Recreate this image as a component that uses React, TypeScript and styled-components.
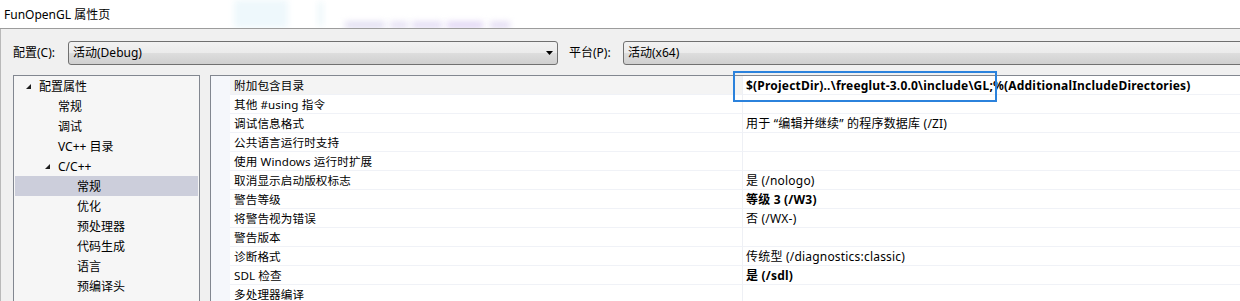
import * as React from "react";
import styled, { createGlobalStyle } from "styled-components";

const UI_FONT = `"Noto Sans", "Noto Sans CJK SC", sans-serif`;

const GlobalStyle = createGlobalStyle`
  html, body {
    margin: 0;
    padding: 0;
    background: #f0f0f0;
  }
  body {
    font-family: ${UI_FONT};
    font-size: 12px;
    color: #000;
  }
`;

// --------------------------------------------------------------------------------
// Window frame

const Window = styled.div`
  width: 1240px;
  height: 301px;
  overflow: hidden;
  background: #f0f0f0;
  display: flex;
  flex-direction: column;
`;

const TitleBar = styled.div`
  position: relative;
  height: 28px;
  flex: none;
  background: #ffffff;
  border-bottom: 1px solid #9c9c9c;
  display: flex;
  align-items: center;
  padding-left: 4px;
  overflow: hidden;
`;

const TitleText = styled.span`
  position: relative;
  z-index: 2;
  font-size: 12px;
  line-height: 16px;
  margin-top: 1px;
`;

// blurred aero glass smudges behind the title
const Smudge = styled.div<{ $x: number; $y: number; $w: number; $h: number; $c: string }>`
  position: absolute;
  left: ${(p) => p.$x}px;
  top: ${(p) => p.$y}px;
  width: ${(p) => p.$w}px;
  height: ${(p) => p.$h}px;
  background: ${(p) => p.$c};
  filter: blur(3px);
`;

const Body = styled.div`
  flex: 1;
  display: flex;
  flex-direction: column;
  padding: 12px 0 0 12px;
  border-left: 1px solid #b9b9b9;
  min-height: 0;
`;

// --------------------------------------------------------------------------------
// Config / platform row

const ConfigRow = styled.div`
  display: flex;
  align-items: center;
  height: 24px;
  flex: none;
`;

const FieldLabel = styled.span<{ $w: number; $gap?: number }>`
  width: ${(p) => p.$w}px;
  margin-left: ${(p) => p.$gap ?? 0}px;
  flex: none;
  line-height: 16px;
`;

const Combo = styled.div<{ $w: number }>`
  position: relative;
  width: ${(p) => p.$w}px;
  height: 24px;
  flex: none;
  box-sizing: border-box;
  border: 1px solid #707070;
  border-radius: 3px;
  background: linear-gradient(#f2f2f2 0%, #ebebeb 48%, #dddddd 52%, #cfcfcf 100%);
  display: flex;
  align-items: center;
  padding-left: 4px;
  line-height: 16px;
`;

const ComboArrow = styled.svg`
  position: absolute;
  right: 4px;
  top: 9px;
`;

// --------------------------------------------------------------------------------
// Lower split: tree + property grid

const Split = styled.div`
  flex: 1;
  display: flex;
  gap: 10px;
  margin-top: 10px;
  min-height: 0;
`;

const Tree = styled.div`
  width: 187px;
  flex: none;
  box-sizing: border-box;
  border: 1px solid #828790;
  border-bottom: none;
  background: #f6f6f6;
  padding: 0 1px;
`;

const TreeItem = styled.div<{ $level: number; $selected?: boolean }>`
  height: 20px;
  display: flex;
  align-items: center;
  padding-left: ${(p) => 10 + (p.$level - 1) * 19}px;
  padding-top: 1px;
  box-sizing: border-box;
  background: ${(p) => (p.$selected ? "#cccedb" : "transparent")};
  line-height: 16px;
  white-space: nowrap;
`;

const Toggle = styled.svg`
  width: 14px;
  flex: none;
`;

const Grid = styled.div`
  position: relative;
  flex: 1;
  box-sizing: border-box;
  border-top: 1px solid #828790;
  border-left: 1px solid #828790;
  background: #ffffff;
  display: flex;
  flex-direction: column;
`;

const GridRow = styled.div`
  display: grid;
  grid-template-columns: 19px 512px 1fr;
  height: 19px;
  flex: none;
`;

const Gutter = styled.div`
  background: #f5f7fb;
`;

const NameCell = styled.div<{ $selected?: boolean }>`
  box-sizing: border-box;
  border-bottom: 1px solid #f0f2f7;
  background: ${(p) => (p.$selected ? "#f4f4f4" : "#ffffff")};
  padding: 1px 0 0 4px;
  display: flex;
  align-items: center;
  font-size: 11.6px;
  letter-spacing: 0.1px;
  line-height: 16px;
  white-space: nowrap;
`;

const ValueCell = styled.div<{ $bold?: boolean }>`
  box-sizing: border-box;
  border-bottom: 1px solid #f0f2f7;
  border-left: 1px solid #eef0f5;
  padding: 1px 0 0 3px;
  display: flex;
  align-items: center;
  line-height: 16px;
  letter-spacing: 0.2px;
  white-space: nowrap;
  font-weight: ${(p) => (p.$bold ? 700 : 400)};
`;

const Highlight = styled.div`
  position: absolute;
  left: 522px;
  top: -5px;
  width: 264px;
  height: 31px;
  box-sizing: border-box;
  border: 2px solid #2b82dc;
  pointer-events: none;
`;

// --------------------------------------------------------------------------------

const treeItems: { label: string; level: number; toggle?: boolean; selected?: boolean }[] = [
  { label: "配置属性", level: 1, toggle: true },
  { label: "常规", level: 2 },
  { label: "调试", level: 2 },
  { label: "VC++ 目录", level: 2 },
  { label: "C/C++", level: 2, toggle: true },
  { label: "常规", level: 3, selected: true },
  { label: "优化", level: 3 },
  { label: "预处理器", level: 3 },
  { label: "代码生成", level: 3 },
  { label: "语言", level: 3 },
  { label: "预编译头", level: 3 },
];

const props: { name: string; value?: string; bold?: boolean; selected?: boolean }[] = [
  {
    name: "附加包含目录",
    value: "$(ProjectDir)..\\freeglut-3.0.0\\include\\GL;%(AdditionalIncludeDirectories)",
    bold: true,
    selected: true,
  },
  { name: "其他 #using 指令" },
  { name: "调试信息格式", value: "用于 “编辑并继续” 的程序数据库 (/ZI)" },
  { name: "公共语言运行时支持" },
  { name: "使用 Windows 运行时扩展" },
  { name: "取消显示启动版权标志", value: "是 (/nologo)" },
  { name: "警告等级", value: "等级 3 (/W3)", bold: true },
  { name: "将警告视为错误", value: "否 (/WX-)" },
  { name: "警告版本" },
  { name: "诊断格式", value: "传统型 (/diagnostics:classic)" },
  { name: "SDL 检查", value: "是 (/sdl)", bold: true },
  { name: "多处理器编译" },
];

const ExpandedGlyph = () => (
  <Toggle height="6" viewBox="0 0 14 6">
    <polygon points="5,0 5,5 0,5" fill="#1e1e1e" transform="translate(1,0)" />
  </Toggle>
);

export default function App() {
  return (
    <>
      <GlobalStyle />
      <Window>
        <TitleBar>
          <Smudge $x={234} $y={0} $w={54} $h={28} $c="#eef8fc" />
          <Smudge $x={318} $y={2} $w={5} $h={24} $c="#ebf6fa" />
          <Smudge $x={345} $y={22} $w={40} $h={6} $c="#dedaf0" />
          <Smudge $x={390} $y={22} $w={18} $h={6} $c="#e2dcf2" />
          <Smudge $x={412} $y={22} $w={30} $h={6} $c="#e0d8f3" />
          <Smudge $x={447} $y={22} $w={36} $h={6} $c="#dcd0f3" />
          <Smudge $x={490} $y={22} $w={20} $h={6} $c="#e0d8f3" />
          <TitleText>FunOpenGL 属性页</TitleText>
        </TitleBar>
        <Body>
          <ConfigRow>
            <FieldLabel $w={55}>配置(C):</FieldLabel>
            <Combo $w={490}>
              活动(Debug)
              <ComboArrow width="7" height="4" viewBox="0 0 7 4">
                <polygon points="0,0 7,0 3.5,4" fill="#000" />
              </ComboArrow>
            </Combo>
            <FieldLabel $w={54} $gap={11}>
              平台(P):
            </FieldLabel>
            <Combo $w={640}>活动(x64)</Combo>
          </ConfigRow>
          <Split>
            <Tree>
              {treeItems.map((t, i) => (
                <TreeItem key={i} $level={t.level} $selected={t.selected}>
                  {t.toggle ? <ExpandedGlyph /> : <Toggle height="6" />}
                  {t.label}
                </TreeItem>
              ))}
            </Tree>
            <Grid>
              {props.map((p, i) => (
                <GridRow key={i}>
                  <Gutter />
                  <NameCell $selected={p.selected}>{p.name}</NameCell>
                  <ValueCell $bold={p.bold}>{p.value}</ValueCell>
                </GridRow>
              ))}
              <Highlight />
            </Grid>
          </Split>
        </Body>
      </Window>
    </>
  );
}
